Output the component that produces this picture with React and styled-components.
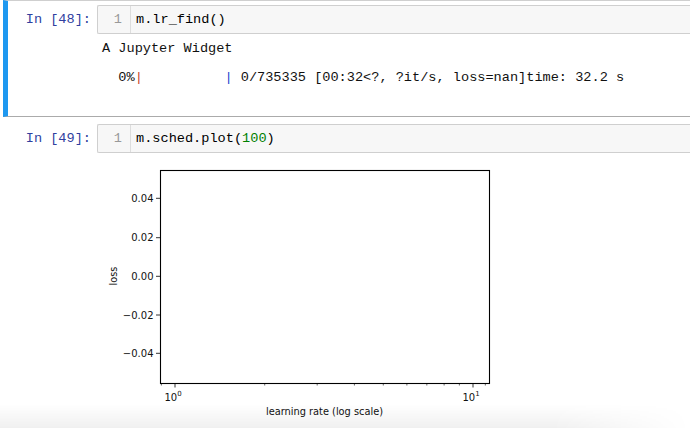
import styled, { createGlobalStyle } from "styled-components";

const GlobalStyle = createGlobalStyle`
  html, body {
    margin: 0;
    padding: 0;
    background: #fff;
    overflow: hidden;
  }
  body {
    width: 690px;
    height: 428px;
    font-family: "Liberation Mono", "Courier New", monospace;
  }
`;

const Notebook = styled.div`
  position: relative;
  display: flex;
  flex-direction: column;
  width: 690px;
  height: 428px;
  overflow: hidden;

  /* soft shadow of the screenshot edge */
  &::after {
    content: "";
    position: absolute;
    left: 0;
    right: 0;
    bottom: 0;
    height: 24px;
    background: linear-gradient(to bottom, rgba(0, 0, 0, 0), rgba(0, 0, 0, 0.06));
    -webkit-mask-image: linear-gradient(to right, #000 80%, transparent 100%);
    mask-image: linear-gradient(to right, #000 80%, transparent 100%);
    pointer-events: none;
  }
`;

const Cell = styled.div`
  margin-left: 3px;
  border-left: 5px solid ${(p) => (p.selected ? "#1e98f0" : "transparent")};
  border-top: 1px solid ${(p) => (p.selected ? "#cfcfcf" : "transparent")};
  border-bottom: 1px solid ${(p) => (p.selected ? "#ababab" : "transparent")};
  padding-top: ${(p) => p.padTop}px;
  padding-bottom: ${(p) => p.padBottom || 0}px;
  display: flex;
  flex-direction: column;
`;

const Row = styled.div`
  display: flex;
  align-items: ${(p) => (p.center ? "center" : "flex-start")};
`;

const Prompt = styled.div`
  flex: 0 0 89px;
  box-sizing: border-box;
  padding-right: 6px;
  text-align: right;
  color: #303f9f;
  font-size: 13.6px;
  line-height: 17px;
  white-space: pre;
`;

const InputBox = styled.div`
  flex: 1;
  display: flex;
  height: 27px;
  border: 1px solid #cfcfcf;
  border-right: none;
  border-radius: 2px 0 0 2px;
  background: #f7f7f7;
  font-size: 13.6px;
`;

const Gutter = styled.div`
  width: 24px;
  padding-right: 8px;
  border-right: 1px solid #dddddd;
  text-align: right;
  color: #999999;
  line-height: 27px;
`;

const Code = styled.div`
  padding-left: 5px;
  line-height: 28px;
  color: #000;
  white-space: pre;
`;

const Num = styled.span`
  color: #008000;
`;

const Output = styled.div`
  flex: 1;
  display: flex;
  flex-direction: column;
  padding-left: 5px;
  font-size: 13.6px;
  line-height: 17px;
  color: #111;
`;

const Line = styled.div`
  white-space: pre;
  margin-top: ${(p) => p.gap || 0}px;
`;

const Pipe = styled.span`
  color: ${(p) => p.color};
`;

const FigureWrap = styled.div`
  margin-top: 7px;
  display: flex;
`;

const XSTART = 175;
const XEND = 473;
const decade = XEND - XSTART;
const lx = (v) => XSTART + decade * Math.log10(v);

const minorTicks = [0.9, 2, 3, 4, 5, 6, 7, 8, 9, 11];
const yTicks = [
  { label: "0.04", y: 198.3 },
  { label: "0.02", y: 237.7 },
  { label: "0.00", y: 276.3 },
  { label: "\u22120.02", y: 315 },
  { label: "\u22120.04", y: 353.3 },
];

function Plot() {
  const font = "DejaVu Sans, Liberation Sans, sans-serif";
  const fs = 10;
  return (
    <svg width="410" height="268" viewBox="97 160 410 268">
      <rect x="160.5" y="170.5" width="329" height="213" fill="none" stroke="#000" strokeWidth="1.1" />
      {yTicks.map((t) => (
        <g key={t.label}>
          <line x1="156" x2="160" y1={t.y} y2={t.y} stroke="#000" strokeWidth="0.8" />
          <text x="153.5" y={t.y + 3.6} textAnchor="end" fontSize={fs} fontFamily={font} fill="#111">
            {t.label}
          </text>
        </g>
      ))}
      {[1, 10].map((v) => (
        <line key={v} x1={lx(v)} x2={lx(v)} y1="383.5" y2="387.5" stroke="#000" strokeWidth="0.8" />
      ))}
      {minorTicks.map((v) => (
        <line key={v} x1={lx(v)} x2={lx(v)} y1="383.5" y2="385.5" stroke="#000" strokeWidth="0.6" />
      ))}
      <text x={lx(1) - 2} y="400.5" textAnchor="middle" fontSize={fs} fontFamily={font} fill="#111">
        10
        <tspan fontSize="7" dy="-4.5">0</tspan>
      </text>
      <text x={lx(10) - 2} y="400.5" textAnchor="middle" fontSize={fs} fontFamily={font} fill="#111">
        10
        <tspan fontSize="7" dy="-4.5">1</tspan>
      </text>
      <text x="324.5" y="415" textAnchor="middle" fontSize="9.8" fontFamily={font} fill="#111">
        learning rate (log scale)
      </text>
      <text
        x="0"
        y="0"
        transform="translate(116.5 276) rotate(-90)"
        textAnchor="middle"
        fontSize="9.8"
        fontFamily={font}
        fill="#111"
      >
        loss
      </text>
    </svg>
  );
}

export default function App() {
  return (
    <>
      <GlobalStyle />
      <Notebook>
        <Cell selected padTop={4} padBottom={30}>
          <Row center>
            <Prompt>In [48]:</Prompt>
            <InputBox>
              <Gutter>1</Gutter>
              <Code>m.lr_find()</Code>
            </InputBox>
          </Row>
          <Row>
            <Prompt />
            <Output>
              <Line gap={6}>A Jupyter Widget</Line>
              <Line gap={12}>
                {"  0%"}
                <Pipe color="#c8452b">|</Pipe>
                {"          "}
                <Pipe color="#1c3fd0">|</Pipe>
                {" 0/735335 [00:32<?, ?it/s, loss=nan]time: 32.2 s"}
              </Line>
            </Output>
          </Row>
        </Cell>
        <Cell padTop={6}>
          <Row center>
            <Prompt>In [49]:</Prompt>
            <InputBox>
              <Gutter>1</Gutter>
              <Code>
                m.sched.plot(<Num>100</Num>)
              </Code>
            </InputBox>
          </Row>
          <Row>
            <Prompt />
            <FigureWrap>
              <Plot />
            </FigureWrap>
          </Row>
        </Cell>
      </Notebook>
    </>
  );
}
